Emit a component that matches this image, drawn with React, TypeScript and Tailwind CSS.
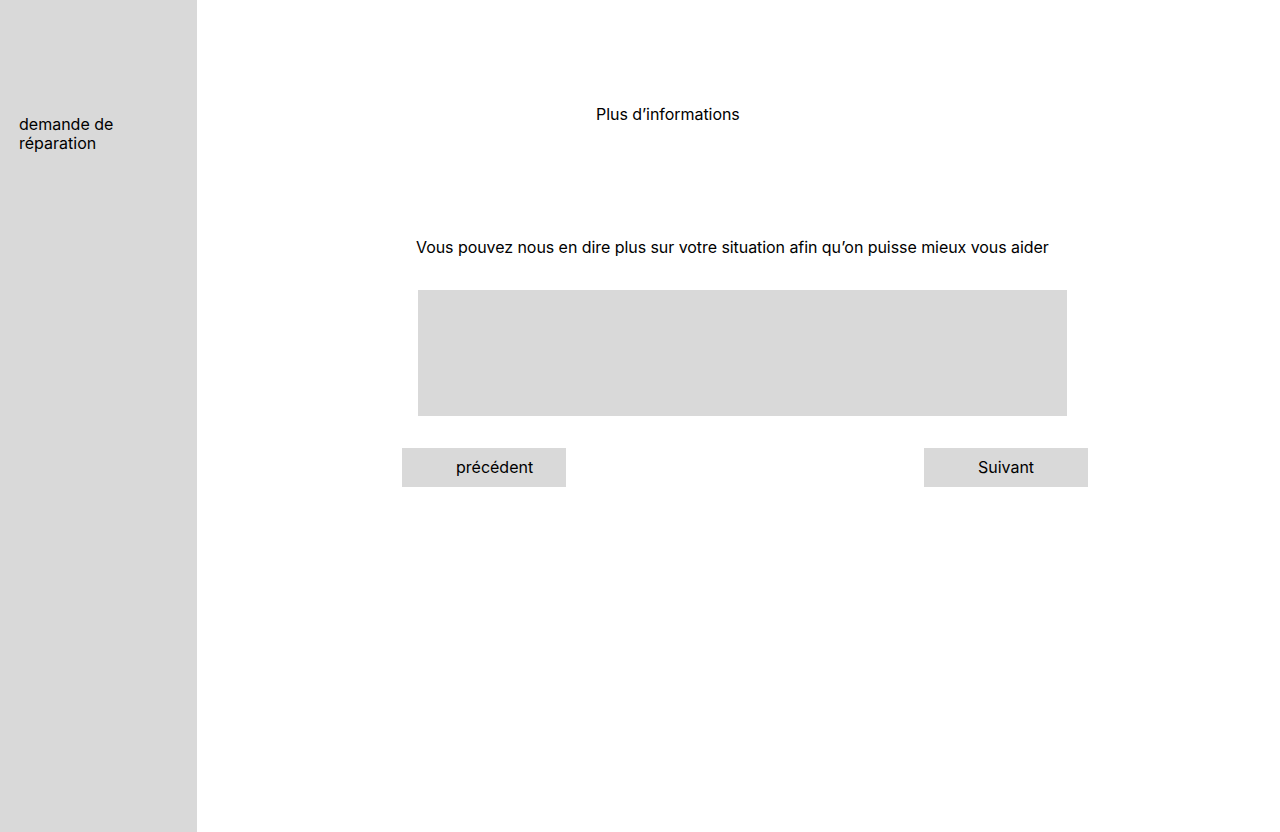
export default function App() {
  return (
    <div className="flex h-[832px] w-full bg-white text-black" style={{ fontFamily: 'Inter, "Noto Sans", sans-serif' }}>
      <aside className="w-[197px] shrink-0 bg-[#d9d9d9] pt-[115px] pl-[19px] text-base leading-[19px]">
        <p className="w-[120px]">demande de réparation</p>
      </aside>

      <main className="flex-1 text-base leading-[19px]">
        <h1 className="ml-[399px] mt-[105px] font-normal tracking-[-0.05px]">Plus d’informations</h1>

        <p className="ml-[219px] mt-[114px] tracking-[-0.06px]">
          Vous pouvez nous en dire plus sur votre situation afin qu’on puisse mieux vous aider
        </p>

        <div className="ml-[221px] mt-[33px] h-[126px] w-[649px] bg-[#d9d9d9]" />

        <div className="ml-[205px] mt-[32px] flex w-[686px] justify-between">
          <button className="h-[39px] w-[164px] bg-[#d9d9d9] pl-[54px] text-left">précédent</button>
          <button className="h-[39px] w-[164px] bg-[#d9d9d9] text-center">Suivant</button>
        </div>
      </main>
    </div>
  )
}
